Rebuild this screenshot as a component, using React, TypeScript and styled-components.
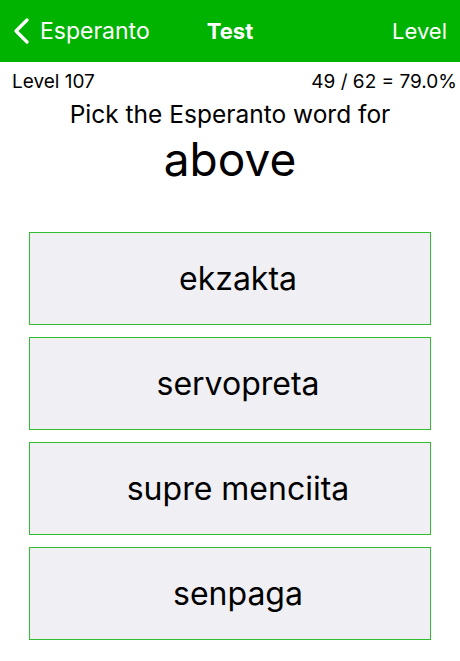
import React from 'react';
import styled, { createGlobalStyle } from 'styled-components';

const GlobalStyle = createGlobalStyle`
  body {
    margin: 0;
    background: #ffffff;
    font-family: Inter, "Liberation Sans", sans-serif;
    color: #000000;
  }
`;

const StyledNavBar = styled.header`
  height: 62px;
  background: #00b300;
  color: #ffffff;
  display: grid;
  grid-template-columns: 1fr auto 1fr;
  align-items: center;
  padding: 0 12px;
  box-sizing: border-box;
`;
const StyledBack = styled.div`
  display: flex;
  align-items: center;
  gap: 10px;
  font-size: 23px;
  svg {
    display: block;
  }
`;
const StyledTitle = styled.h1`
  margin: 0;
  font-size: 22px;
  font-weight: 700;
`;
const StyledNavAction = styled.div`
  justify-self: end;
  font-size: 22px;
  padding-right: 1px;
`;
const StyledStats = styled.div`
  display: flex;
  justify-content: space-between;
  padding: 9px 3px 0 12px;
  font-size: 19px;
  line-height: 22px;
`;
const StyledPrompt = styled.p`
  margin: 6px 0 0;
  text-align: center;
  font-size: 24.5px;
  line-height: 30px;
`;
const StyledWord = styled.h2`
  margin: 4px 0 0;
  text-align: center;
  font-size: 46px;
  font-weight: 400;
  line-height: 52px;
`;
const StyledChoices = styled.div`
  display: flex;
  flex-direction: column;
  gap: 12px;
  padding: 47px 29px 0;
`;
const StyledChoice = styled.button`
  height: 93px;
  border: 1.6px solid #30bd30;
  background: #efeff4;
  font-family: inherit;
  font-size: 32px;
  color: #000000;
  padding: 0 0 0 16px;
`;

const choices = ['ekzakta', 'servopreta', 'supre menciita', 'senpaga'];

const App = () => {
  return (
    <>
      <GlobalStyle />
      <StyledNavBar>
        <StyledBack>
          <svg width="18" height="26" viewBox="0 0 18 26">
            <path d="M15 2 L4 13 L15 24" fill="none" stroke="#ffffff" strokeWidth="3.2" strokeLinecap="round" strokeLinejoin="round" />
          </svg>
          Esperanto
        </StyledBack>
        <StyledTitle>Test</StyledTitle>
        <StyledNavAction>Level</StyledNavAction>
      </StyledNavBar>
      <StyledStats>
        <span>Level 107</span>
        <span>49 / 62 = 79.0%</span>
      </StyledStats>
      <StyledPrompt>Pick the Esperanto word for</StyledPrompt>
      <StyledWord>above</StyledWord>
      <StyledChoices>
        {choices.map((choice) => (
          <StyledChoice key={choice} type="button">
            {choice}
          </StyledChoice>
        ))}
      </StyledChoices>
    </>
  );
};

export default App;
